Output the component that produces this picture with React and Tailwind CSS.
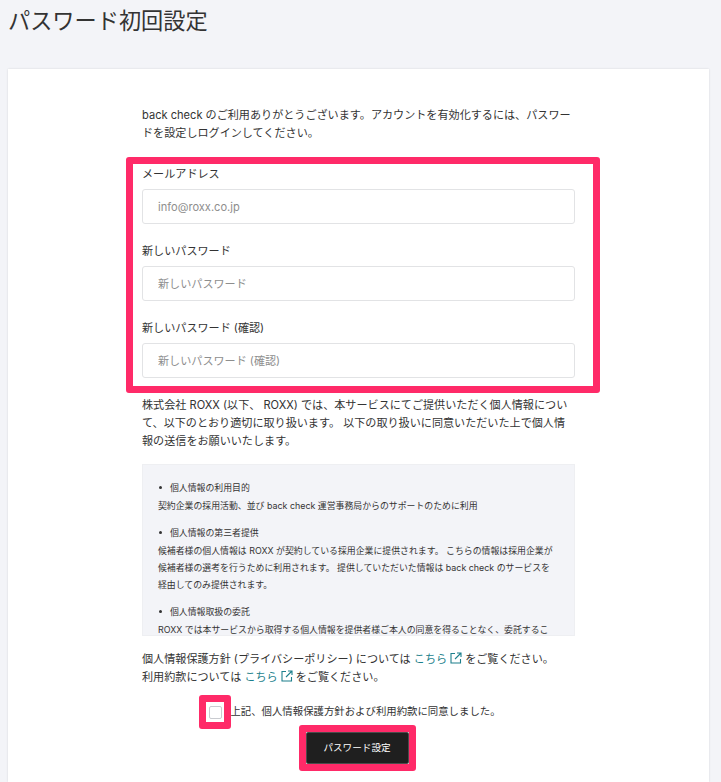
import React from 'react';

const font = { fontFamily: '"Inter", "Noto Sans CJK JP", sans-serif' };

function ExternalIcon() {
  return (
    <svg className="inline-block mx-[3px] align-[-1px]" width="12" height="12" viewBox="0 0 12 12" fill="none" stroke="#1d7f8c" strokeWidth="1.1">
      <path d="M5 1.5H1v9.5h9.5V7" />
      <path d="M5 7l5.5-5.5M7 1h4v4" />
    </svg>
  );
}

function Field({ label, placeholder, className }) {
  return (
    <div className={className}>
      <label className="block text-[11.1px] leading-[18px] text-[#333]">{label}</label>
      <input
        readOnly
        placeholder={placeholder}
        className="mt-[6px] block w-full h-[35px] px-[15px] bg-white border border-[#e2e3e5] rounded-[3px] text-[11.1px] placeholder:text-[#8e8e8e] outline-none"
      />
    </div>
  );
}

function PolicyItem({ title, children, className }) {
  return (
    <div className={className}>
      <div className="flex items-center h-[17px]">
        <span className="w-[3px] h-[3px] ml-[1px] mr-[8px] rounded-full bg-[#333]" />
        <span>{title}</span>
      </div>
      <p className="mt-[1px] leading-[17px]">{children}</p>
    </div>
  );
}

export default function App() {
  return (
    <div className="w-[721px] h-[782px] overflow-hidden bg-[#f3f4f8] text-[#333]" style={font}>
      <h1 className="pl-[8px] pt-[7px] h-[69px] text-[22.2px] leading-[28px] text-[#333]">パスワード初回設定</h1>

      <div className="ml-[8px] w-[701px] h-[713px] bg-white shadow-[0_0_2px_rgba(0,0,0,0.12)] pt-[37px] pl-[134px]">
        <div className="w-[433px]">
          <p className="text-[11.1px] leading-[18px] pr-[4px]">
            back check のご利用ありがとうございます。アカウントを有効化するには、パスワードを設定しログインしてください。
          </p>

          <div className="mt-[15px] -ml-[16px] w-[474px] h-[236px] border-[7px] border-[#ff2a68] rounded-[3px] pl-[9px] pr-[18px] pt-[1px]">
            <Field label="メールアドレス" placeholder="info@roxx.co.jp" />
            <Field className="mt-[18px]" label="新しいパスワード" placeholder="新しいパスワード" />
            <Field className="mt-[18px]" label="新しいパスワード (確認)" placeholder="新しいパスワード (確認)" />
          </div>

          <p className="mt-[3px] text-[11.1px] leading-[18px]">
            株式会社 ROXX (以下、 ROXX) では、本サービスにてご提供いただく個人情報について、以下のとおり適切に取り扱います。 以下の取り扱いに同意いただいた上で個人情報の送信をお願いいたします。
          </p>

          <div className="mt-[14px] h-[172px] overflow-hidden bg-[#f3f4f8] border border-[#eeeff2] pt-[14px] pl-[15px] pr-[14px] text-[8.9px]">
            <PolicyItem title="個人情報の利用目的">
              契約企業の採用活動、並び back check 運営事務局からのサポートのために利用
            </PolicyItem>
            <PolicyItem className="mt-[10px]" title="個人情報の第三者提供">
              候補者様の個人情報は ROXX が契約している採用企業に提供されます。 こちらの情報は採用企業が<br />
              候補者様の選考を行うために利用されます。 提供していただいた情報は back check のサービスを<br />
              経由してのみ提供されます。
            </PolicyItem>
            <PolicyItem className="mt-[10px]" title="個人情報取扱の委託">
              ROXX では本サービスから取得する個人情報を提供者様ご本人の同意を得ることなく、委託するこ<br />
              とはありません。
            </PolicyItem>
          </div>

          <p className="mt-[14px] text-[11.1px] leading-[18px]">
            個人情報保護方針 (プライバシーポリシー) については <a className="text-[#1d7f8c]">こちら<ExternalIcon /></a>をご覧ください。
            <br />
            利用約款については <a className="text-[#1d7f8c]">こちら<ExternalIcon /></a>をご覧ください。
          </p>

          <div className="mt-[9px] flex items-center justify-center text-[10.4px] -ml-[17px]">
            <span className="w-[32px] h-[34px] shrink-0 flex items-center justify-center border-[7px] border-[#ff2a68] rounded-[3px]">
              <span className="block w-[13px] h-[13px] border border-[#c9cbd0] rounded-[2px] bg-white" />
            </span>
            <span className="-ml-[1px]">上記、個人情報保護方針および利用約款に同意しました。</span>
          </div>

          <div className="-mt-[4px] -ml-[3px] flex justify-center">
            <div className="w-[117px] h-[46px] border-[7px] border-[#ff2a68] rounded-[3px] flex">
              <button className="flex-1 bg-[#1f1f1f] rounded-[2px] text-white text-[9.6px] border border-white/20">パスワード設定</button>
            </div>
          </div>
        </div>
      </div>
    </div>
  );
}
